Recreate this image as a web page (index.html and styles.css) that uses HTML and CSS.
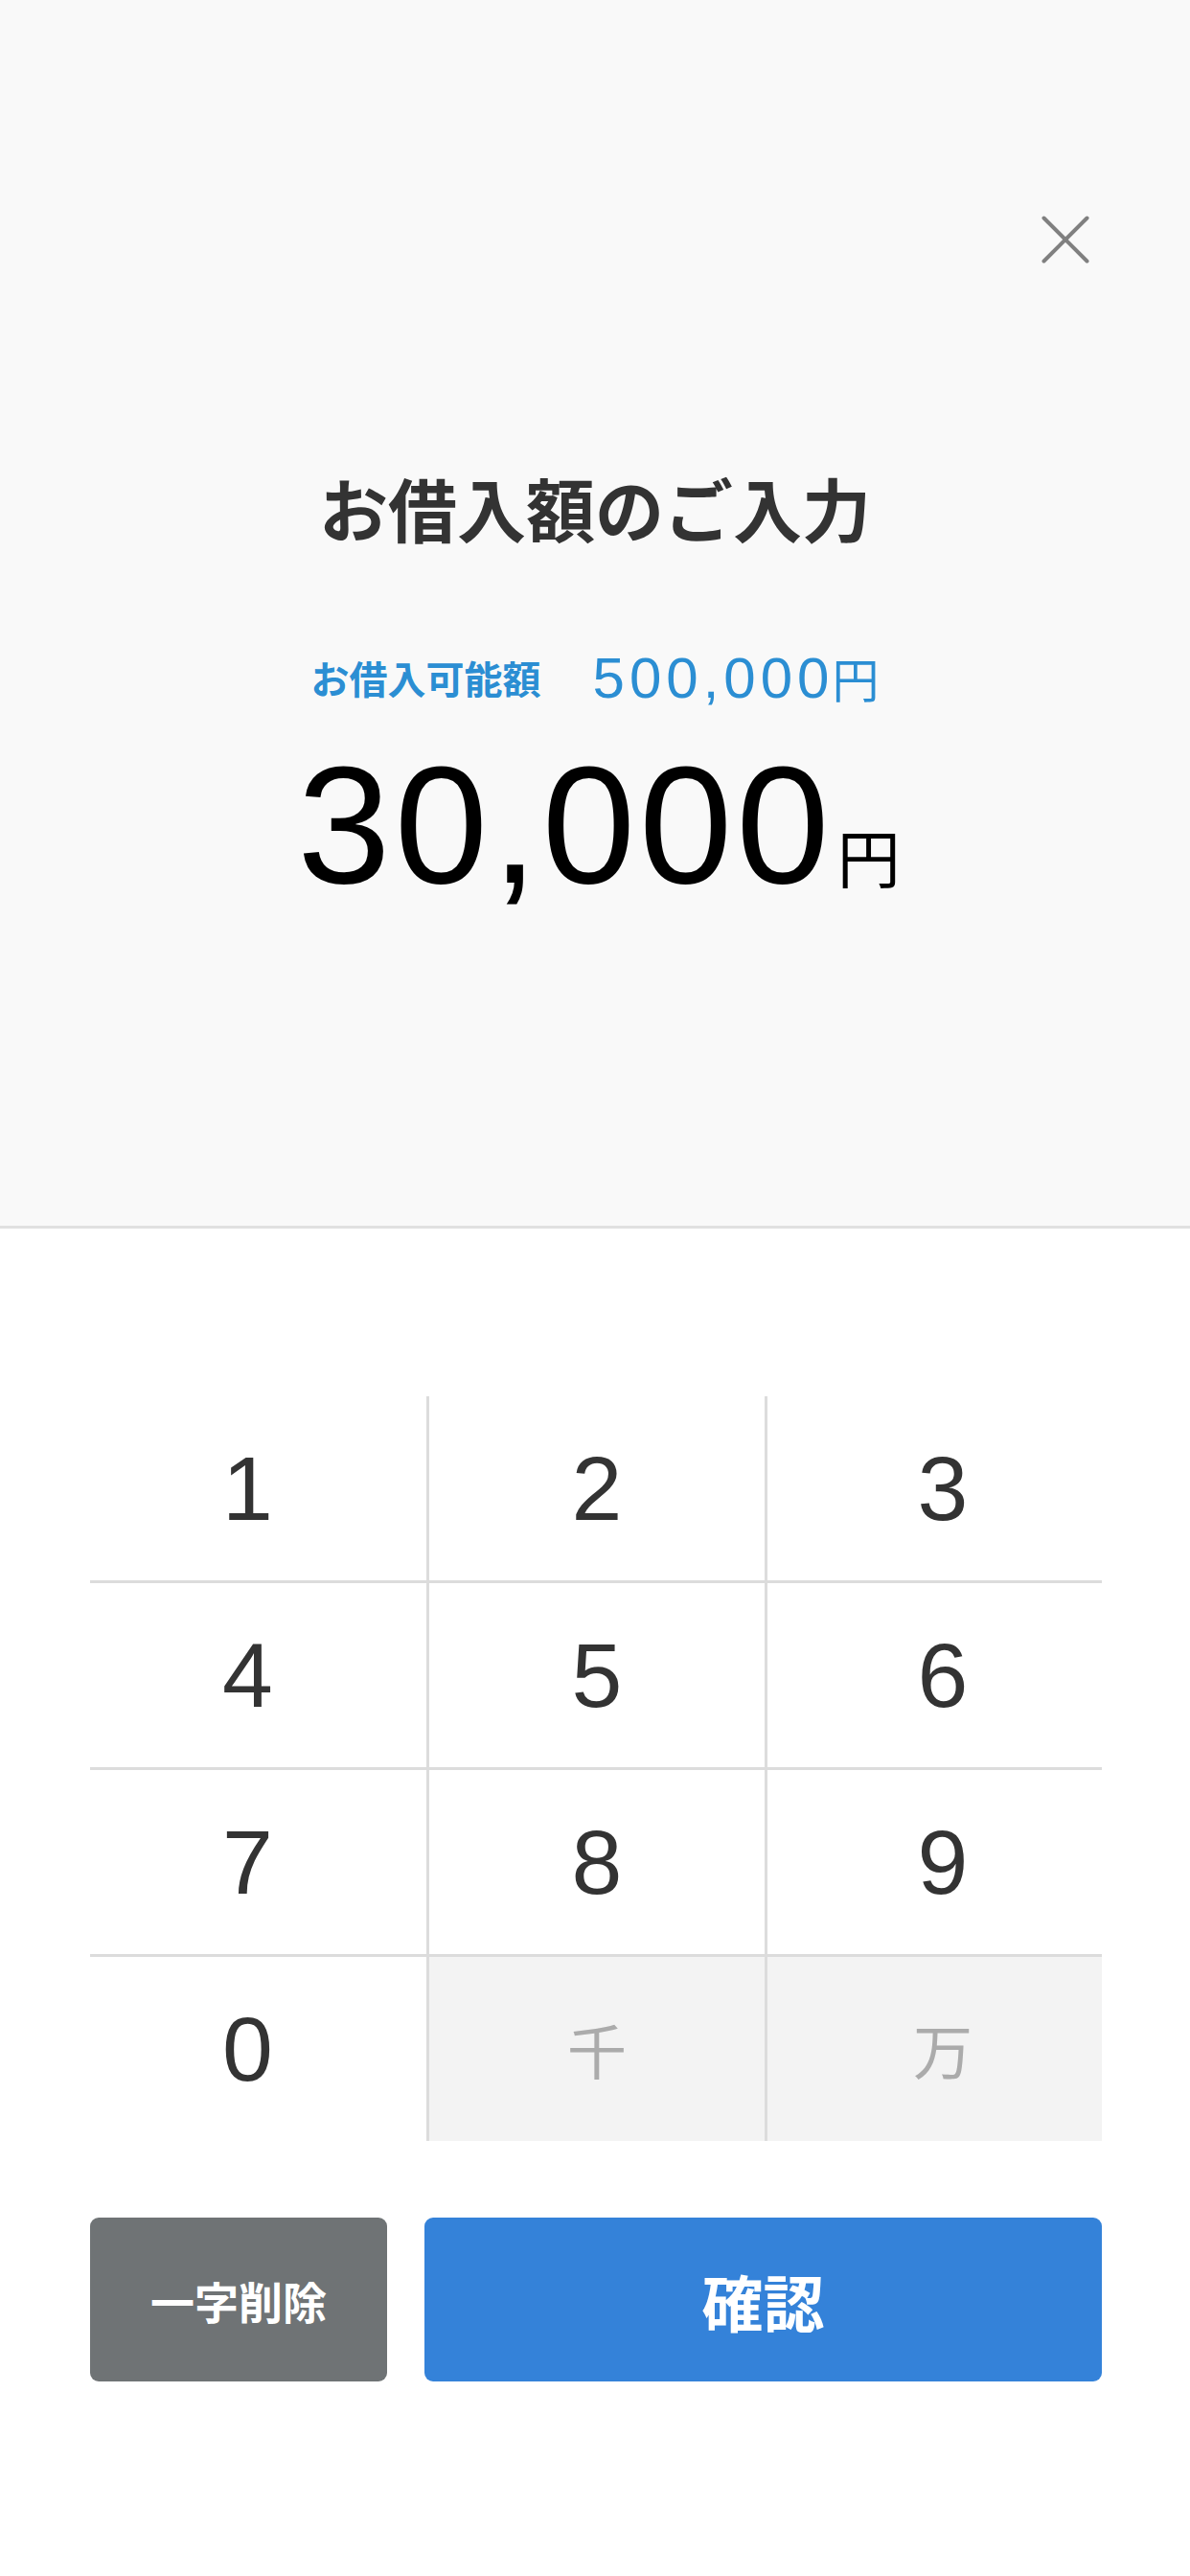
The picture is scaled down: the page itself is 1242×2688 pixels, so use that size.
FILE: index.html
```html
<!DOCTYPE html>
<html lang="ja">
  <head>
    <meta charset="UTF-8" />
    <meta name="viewport" content="width=device-width, initial-scale=1.0" />
    <title>お借入額のご入力</title>
    <link rel="stylesheet" href="styles.css">
  </head>
  <body>
    <div class="header">
      <div class="close-row">
        <button class="close-button" aria-label="閉じる">
          <svg width="50" height="50" viewBox="0 0 50 50">
            <line x1="2.5" y1="2.5" x2="47.5" y2="47.5" />
            <line x1="47.5" y1="2.5" x2="2.5" y2="47.5" />
          </svg>
        </button>
      </div>
      <h1 class="title">お借入額のご入力</h1>
      <div class="limit">
        <span class="limit-label">お借入可能額</span><span class="limit-amount">500,000</span><span class="limit-yen">円</span>
      </div>
      <div class="amount">
        <span class="amount-value">30,000</span><span class="amount-yen">円</span>
      </div>
    </div>

    <!-- Keypad -->
    <div class="keypad">
      <div class="key col-1">1</div>
      <div class="key">2</div>
      <div class="key col-3">3</div>
      <div class="key col-1">4</div>
      <div class="key">5</div>
      <div class="key col-3">6</div>
      <div class="key col-1">7</div>
      <div class="key">8</div>
      <div class="key col-3">9</div>
      <div class="key col-1 last-row">0</div>
      <div class="key unit last-row">千</div>
      <div class="key unit col-3 last-row">万</div>
    </div>

    <div class="actions">
      <button class="delete-button">一字削除</button>
      <button class="confirm-button">確認</button>
    </div>
  </body>
</html>
```

FILE: styles.css
```css
body {
  margin: 0;
  padding: 0;
  width: 1242px;
  min-height: 2688px;
  background-color: #ffffff;
  font-family: "Noto Sans CJK JP", sans-serif;
  color: #333333;
}
button {
  font-family: "Noto Sans CJK JP", sans-serif;
  border: none;
  cursor: pointer;
}
.header {
  height: 1282px;
  padding-top: 225px;
  box-sizing: border-box;
  background-color: #f9f9f9;
  border-bottom: 3px solid #e1e1e1;
  text-align: center;
}
.close-row {
  display: flex;
  justify-content: flex-end;
  padding-right: 105px;
  height: 50px;
}
.close-button {
  width: 50px;
  height: 50px;
  padding: 0;
  background: none;
}
.close-button svg {
  display: block;
}
.close-button line {
  stroke: #808080;
  stroke-width: 4;
  stroke-linecap: round;
}
.title {
  margin: 218px 0 0;
  font-size: 72px;
  line-height: 72px;
  font-weight: 700;
  color: #333333;
}
.limit {
  margin-top: 110px;
  font-family: "Liberation Sans", Arial, sans-serif;
  font-size: 60px;
  line-height: 64px;
  color: #2b8ed3;
}
.limit-label {
  font-family: "Noto Sans CJK JP", sans-serif;
  font-size: 40px;
  font-weight: 700;
  vertical-align: 4px;
  margin-right: 54px;
}
.limit-amount {
  letter-spacing: 5px;
}
.limit-yen {
  font-family: "Noto Sans CJK JP", sans-serif;
  font-size: 49px;
  margin-left: -2px;
}
.amount {
  margin-top: 33px;
  font-family: "Liberation Sans", Arial, sans-serif;
  font-size: 175px;
  line-height: 1;
  color: #000000;
  padding-left: 8px;
}
.amount-value {
  letter-spacing: 4px;
}
.amount-yen {
  font-family: "Noto Sans CJK JP", sans-serif;
  font-size: 66px;
  margin-left: 4px;
}
/* Keypad */
.keypad {
  display: grid;
  grid-template-columns: 354px 353px 349px;
  grid-auto-rows: 195px;
  margin: 175px 0 0 94px;
  width: 1056px;
}
.key {
  display: flex;
  align-items: center;
  justify-content: center;
  box-sizing: border-box;
  border-right: 3px solid #dcdcdc;
  border-bottom: 3px solid #dcdcdc;
  font-family: "Liberation Sans", Arial, sans-serif;
  font-size: 95px;
  line-height: 192px;
  color: #333333;
}
.key.col-1 {
  padding-right: 22px;
}
.key.col-3 {
  border-right: none;
  padding-left: 17px;
}
.key.last-row {
  border-bottom: none;
  height: 192px;
}
.key.unit {
  background-color: #f3f3f3;
  font-family: "Noto Sans CJK JP", sans-serif;
  font-size: 62px;
  color: #ababab;
}
.actions {
  display: flex;
  gap: 39px;
  margin: 77px 92px 0 94px;
}
.delete-button,
.confirm-button {
  height: 171px;
  border-radius: 9px;
  color: #ffffff;
  font-weight: 700;
}
.delete-button {
  flex: 0 0 310px;
  background-color: #6f7375;
  font-size: 46px;
}
.confirm-button {
  flex: 1;
  background-color: #3482d9;
  font-size: 64px;
}
```
